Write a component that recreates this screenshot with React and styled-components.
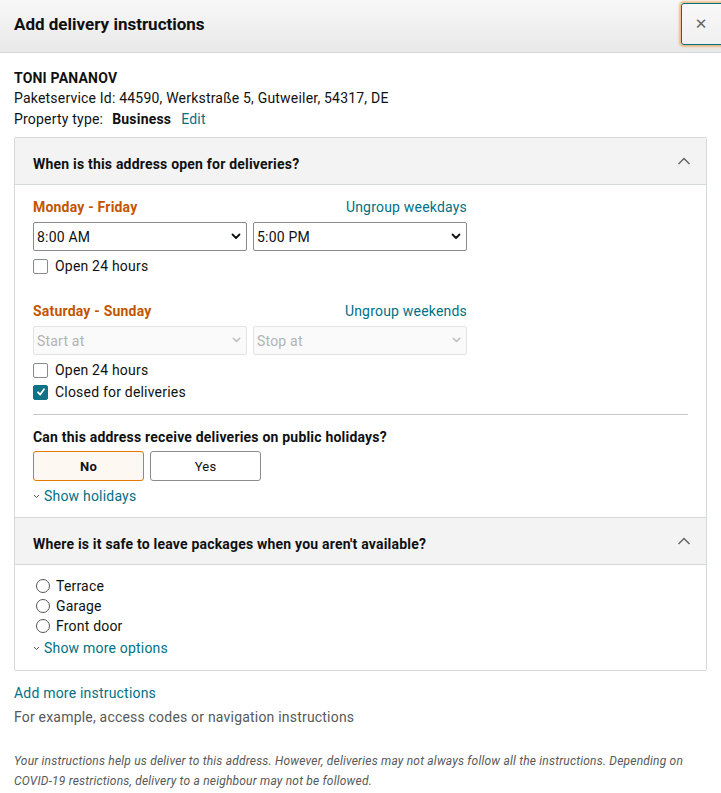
import React from "react";
import styled, { createGlobalStyle } from "styled-components";

const Global = createGlobalStyle`
  * { box-sizing: border-box; }
  html, body { margin: 0; padding: 0; background: #fff; }
  body { font-family: Roboto, "Noto Sans", Arial, sans-serif; color: #0f1111; font-size: 14px; letter-spacing: 0.2px; }
`;

const Page = styled.div`
  width: 721px;
  height: 793px;
  overflow: hidden;
  background: #fff;
`;

const Header = styled.div`
  height: 53px;
  display: flex;
  align-items: center;
  justify-content: space-between;
  padding-left: 14px;
  background: linear-gradient(to bottom, #f7f7f7, #e9e9e9);
  border-bottom: 1px solid #d5d9d9;
`;

const Title = styled.h1`
  margin: 0 0 4px 0;
  font-size: 17px;
  font-weight: 700;
  letter-spacing: 0;
`;

const CloseButton = styled.button`
  align-self: flex-start;
  margin-top: 3px;
  margin-right: -6px;
  width: 46px;
  height: 42px;
  border: 1px solid #007185;
  border-radius: 3px;
  background: linear-gradient(to bottom, #f8f8f8, #f0f0f0);
  box-shadow: 0 0 2px 2px rgba(228, 121, 17, 0.45);
  display: flex;
  align-items: center;
  justify-content: center;
  padding: 0 6px 0 0;
  color: #666;
  font-family: "DejaVu Sans", sans-serif;
  font-size: 15px;
  font-weight: 400;
  cursor: pointer;
`;

const Content = styled.div`
  padding: 15px 14px 0 14px;
`;

const Name = styled.div`
  font-weight: 700;
  line-height: 20px;
`;

const Line = styled.div`
  line-height: 21px;
`;

const Strong = styled.span`
  font-weight: 700;
  margin: 0 10px 0 9px;
`;

const Link = styled.a`
  color: #007185;
  text-decoration: none;
  cursor: pointer;
`;

const Box = styled.div`
  margin-top: 7px;
  border: 1px solid #d5d9d9;
  border-radius: 2px;
`;

const SectionHeader = styled.div`
  height: ${(p) => (p.$top ? 48 : 47)}px;
  background: #f3f3f3;
  border-bottom: 1px solid #d5d9d9;
  border-top: ${(p) => (p.$top ? "1px solid #d5d9d9" : "none")};
  display: flex;
  align-items: center;
  justify-content: space-between;
  padding: 5px 14px 0 18px;
  font-weight: 700;
`;

const SectionBody = styled.div`
  padding: ${(p) => p.$pad || "14px 18px"};
`;

const DayBlock = styled.div`
  width: 434px;
  margin-bottom: ${(p) => p.$mb || 0}px;
`;

const DayRow = styled.div`
  display: flex;
  justify-content: space-between;
  align-items: baseline;
  line-height: 20px;
  margin-bottom: 5px;
`;

const DayLabel = styled.span`
  color: #c45500;
  font-weight: 700;
`;

const Selects = styled.div`
  display: grid;
  grid-template-columns: 214px 214px;
  gap: 6px;
  margin-bottom: 4px;
`;

const SelectWrap = styled.div`
  position: relative;
  height: 29px;
  border: 1px solid ${(p) => (p.$disabled ? "#e3e3e3" : "#888c8c")};
  border-radius: 2px;
  background: ${(p) => (p.$disabled ? "#fafafa" : "#fff")};
  color: ${(p) => (p.$disabled ? "#b3b3b3" : "#0f1111")};
  display: flex;
  align-items: center;
  padding-left: 3px;
`;

const Chevron = styled.svg`
  position: absolute;
  right: 5px;
  top: 10px;
`;

const CheckRow = styled.label`
  display: flex;
  align-items: center;
  gap: 7px;
  line-height: 22px;
`;

const CheckBox = styled.span`
  width: 15px;
  height: 15px;
  border-radius: 2px;
  border: 1px solid ${(p) => (p.$checked ? "#0f7286" : "#888c8c")};
  background: ${(p) => (p.$checked ? "#0f7286" : "#fff")};
  display: inline-flex;
  align-items: center;
  justify-content: center;
  flex-shrink: 0;
`;

const Divider = styled.hr`
  border: 0;
  border-top: 1px solid #c8c8c8;
  margin: 11px 0 10px 0;
`;

const Question = styled.div`
  font-weight: 700;
  line-height: 24px;
  margin-bottom: 2px;
`;

const Toggles = styled.div`
  display: flex;
  gap: 6px;
  margin-bottom: 5px;
`;

const Toggle = styled.button`
  width: 111px;
  height: 30px;
  border-radius: 3px;
  border: 1px solid ${(p) => (p.$active ? "#e77600" : "#888c8c")};
  background: ${(p) => (p.$active ? "#fef8f2" : "#fff")};
  font-family: inherit;
  font-size: 13px;
  letter-spacing: 0.2px;
  font-weight: ${(p) => (p.$active ? 700 : 400)};
  color: #0f1111;
  cursor: pointer;
`;

const Expander = styled(Link)`
  display: flex;
  align-items: center;
  gap: 4px;
  line-height: 20px;
  margin-top: ${(p) => p.$mt || 0}px;
`;

const RadioRow = styled.label`
  display: flex;
  align-items: center;
  gap: 6px;
  line-height: 20px;
  padding-left: 3px;
`;

const Radio = styled.span`
  width: 14px;
  height: 14px;
  border-radius: 50%;
  border: 1px solid #555;
  background: #fff;
  flex-shrink: 0;
`;

const Footer = styled.div`
  padding-top: 12px;
`;

const FooterLink = styled(Link)`
  display: block;
  line-height: 20px;
  margin-bottom: 4px;
`;

const Hint = styled.div`
  color: #565959;
  line-height: 20px;
`;

const Note = styled.p`
  margin: 24px 0 0 0;
  max-width: 690px;
  font-size: 12px;
  font-style: italic;
  letter-spacing: 0.2px;
  color: #565959;
  line-height: 20px;
`;

const ChevronDown = ({ color = "#0f1111", size = 10 }) => (
  <Chevron width={size} height={size * 0.7} viewBox="0 0 10 7">
    <path d="M1.5 1.5 L5 5 L8.5 1.5" fill="none" stroke={color} strokeWidth="1.8" strokeLinecap="round" strokeLinejoin="round" />
  </Chevron>
);

const Select = ({ value, disabled }) => (
  <SelectWrap $disabled={disabled}>
    {value}
    <ChevronDown color={disabled ? "#c0c0c0" : "#0f1111"} size={disabled ? 9 : 10} />
  </SelectWrap>
);

const Check = ({ checked, children }) => (
  <CheckRow>
    <CheckBox $checked={checked}>
      {checked && (
        <svg width="10" height="10" viewBox="0 0 10 10">
          <path d="M2 5.3 L4.2 7.5 L8 2.2" fill="none" stroke="#fff" strokeWidth="1.8" strokeLinecap="round" strokeLinejoin="round" />
        </svg>
      )}
    </CheckBox>
    {children}
  </CheckRow>
);

const ChevronUp = () => (
  <svg width="16" height="10" viewBox="0 0 16 10" style={{ marginBottom: 5 }}>
    <path d="M2.5 8 L8 2.5 L13.5 8" fill="none" stroke="#666" strokeWidth="1.5" />
  </svg>
);

const SmallChevron = () => (
  <svg width="7" height="5" viewBox="0 0 7 5">
    <path d="M1 1 L3.5 3.5 L6 1" fill="none" stroke="#555" strokeWidth="1" />
  </svg>
);

export default function App() {
  return (
    <Page>
      <Global />
      <Header>
        <Title>Add delivery instructions</Title>
        <CloseButton aria-label="Close">✕</CloseButton>
      </Header>
      <Content>
        <Name>TONI PANANOV</Name>
        <Line>Paketservice Id: 44590, Werkstraße 5, Gutweiler, 54317, DE</Line>
        <Line>
          Property type:<Strong>Business</Strong>
          <Link>Edit</Link>
        </Line>
        <Box>
          <SectionHeader>
            <span>When is this address open for deliveries?</span>
            <ChevronUp />
          </SectionHeader>
          <SectionBody $pad="12px 18px 11px 18px">
            <DayBlock $mb={24}>
              <DayRow>
                <DayLabel>Monday - Friday</DayLabel>
                <Link>Ungroup weekdays</Link>
              </DayRow>
              <Selects>
                <Select value="8:00 AM" />
                <Select value="5:00 PM" />
              </Selects>
              <Check>Open 24 hours</Check>
            </DayBlock>
            <DayBlock>
              <DayRow>
                <DayLabel>Saturday - Sunday</DayLabel>
                <Link>Ungroup weekends</Link>
              </DayRow>
              <Selects>
                <Select value="Start at" disabled />
                <Select value="Stop at" disabled />
              </Selects>
              <Check>Open 24 hours</Check>
              <Check checked>Closed for deliveries</Check>
            </DayBlock>
            <Divider />
            <Question>Can this address receive deliveries on public holidays?</Question>
            <Toggles>
              <Toggle $active>No</Toggle>
              <Toggle>Yes</Toggle>
            </Toggles>
            <Expander>
              <SmallChevron />
              Show holidays
            </Expander>
          </SectionBody>
          <SectionHeader $top>
            <span>Where is it safe to leave packages when you aren't available?</span>
            <ChevronUp />
          </SectionHeader>
          <SectionBody $pad="11px 18px 12px 18px">
            <RadioRow><Radio />Terrace</RadioRow>
            <RadioRow><Radio />Garage</RadioRow>
            <RadioRow><Radio />Front door</RadioRow>
            <Expander $mt={2}>
              <SmallChevron />
              Show more options
            </Expander>
          </SectionBody>
        </Box>
        <Footer>
          <FooterLink>Add more instructions</FooterLink>
          <Hint>For example, access codes or navigation instructions</Hint>
          <Note>
            Your instructions help us deliver to this address. However, deliveries may not always follow all the instructions. Depending on COVID-19 restrictions, delivery to a neighbour may not be followed.
          </Note>
        </Footer>
      </Content>
    </Page>
  );
}
